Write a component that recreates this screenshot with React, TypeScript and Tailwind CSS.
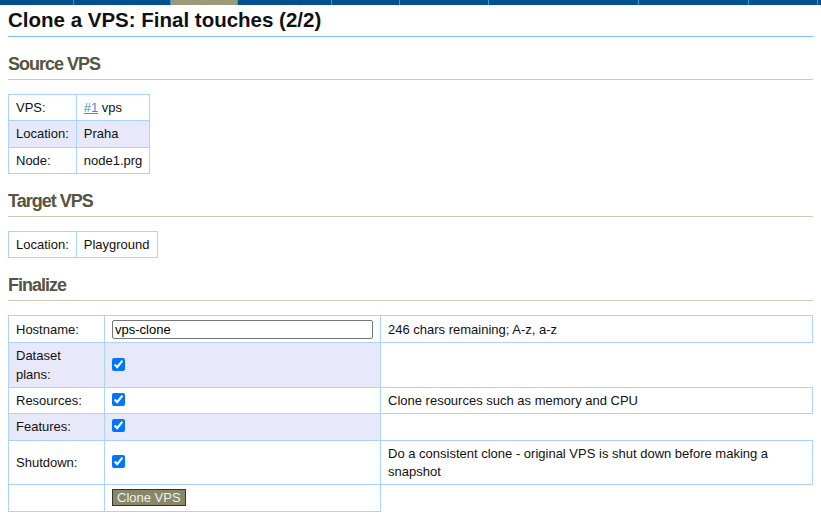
import type { ReactNode } from 'react';

// top menu strip: widths of each tab, the active one is tan
const menuTabs = [
  { w: 'w-[74px]', active: false },
  { w: 'w-[97px]', active: false },
  { w: 'w-[67px]', active: true },
  { w: 'w-[94px]', active: false },
  { w: 'w-[68px]', active: false },
  { w: 'w-[89px]', active: false },
  { w: 'w-[150px]', active: false },
  { w: 'w-[110px]', active: false },
  { w: 'w-[69px]', active: false },
];

const cell = 'border border-[#aad4ff] px-[7px] pt-[4px] pb-[3px] leading-[18.35px] align-middle';
const bare = 'px-[7px] pt-[4px] pb-[3px] leading-[18.35px] align-middle';

function Section({ title, children }: { title: string; children: ReactNode }) {
  return (
    <section>
      <h2 className="mt-[17px] text-[18px] font-bold leading-[21px] tracking-[-1px] text-[#555542] pb-[4px] border-b border-[#cdcbb9]">
        {title}
      </h2>
      <div className="mt-[14px]">{children}</div>
    </section>
  );
}

function Row({ label, value, alt }: { label: string; value: ReactNode; alt?: boolean }) {
  return (
    <tr className={alt ? 'bg-[#e8e8fb]' : ''}>
      <td className={cell}>{label}</td>
      <td className={cell}>{value}</td>
    </tr>
  );
}

function Check() {
  return <input type="checkbox" defaultChecked className="m-0 mb-[4px] align-middle w-[13px] h-[13px]" />;
}

export default function App() {
  return (
    <div className="min-h-[520px] bg-white text-[13px] text-[#111] font-['Liberation_Sans',Arial,sans-serif]">
      <ul className="flex h-[5px] bg-[#00508f]">
        {menuTabs.map((tab, i) => (
          <li
            key={i}
            className={`${tab.w} h-full shrink-0 border-r border-[#2aa0d8] ${tab.active ? 'bg-[#9a9a78]' : 'bg-[#00508f]'}`}
          />
        ))}
      </ul>

      <div className="px-2 pb-2">
        <h1 className="mt-[3px] text-[20.5px] font-bold leading-[23px] pb-[5px] border-b border-[#7cbcf8]">
          Clone a VPS: Final touches (2/2)
        </h1>

        <Section title="Source VPS">
          <table className="border-collapse">
            <tbody>
              <Row
                label="VPS:"
                value={
                  <>
                    <a href="#" className="text-[#3b8ee0] underline">#1</a> vps
                  </>
                }
              />
              <Row label="Location:" value="Praha" alt />
              <Row label="Node:" value="node1.prg" />
            </tbody>
          </table>
        </Section>

        <Section title="Target VPS">
          <table className="border-collapse">
            <tbody>
              <Row label="Location:" value="Playground" />
            </tbody>
          </table>
        </Section>

        <Section title="Finalize">
          <table className="w-full border-collapse">
            <colgroup>
              <col className="w-[96px]" />
              <col className="w-[276px]" />
              <col />
            </colgroup>
            <tbody>
              <tr>
                <td className={cell}>Hostname:</td>
                <td className={cell}>
                  <input
                    type="text"
                    defaultValue="vps-clone"
                    className="block w-[261px] h-[19px] border border-[#767676] rounded-[2px] px-[2px] text-[13px] leading-[15px] text-black"
                  />
                </td>
                <td className={cell}>246 chars remaining; A-z, a-z</td>
              </tr>
              <tr>
                <td className={`${cell} bg-[#e8e8fb]`}>Dataset plans:</td>
                <td className={`${cell} bg-[#e8e8fb]`}><Check /></td>
                <td className={bare} />
              </tr>
              <tr>
                <td className={cell}>Resources:</td>
                <td className={cell}><Check /></td>
                <td className={cell}>Clone resources such as memory and CPU</td>
              </tr>
              <tr>
                <td className={`${cell} bg-[#e8e8fb]`}>Features:</td>
                <td className={`${cell} bg-[#e8e8fb]`}><Check /></td>
                <td className={bare} />
              </tr>
              <tr>
                <td className={cell}>Shutdown:</td>
                <td className={cell}><Check /></td>
                <td className={cell}>Do a consistent clone - original VPS is shut down before making a snapshot</td>
              </tr>
              <tr>
                <td className={cell}>&nbsp;</td>
                <td className={cell}>
                  <button className="border border-[#333] bg-[#888868] text-[#eee] px-[4px] leading-[15px] text-[13px]">
                    Clone VPS
                  </button>
                </td>
                <td className={bare} />
              </tr>
            </tbody>
          </table>
        </Section>
      </div>
    </div>
  );
}
